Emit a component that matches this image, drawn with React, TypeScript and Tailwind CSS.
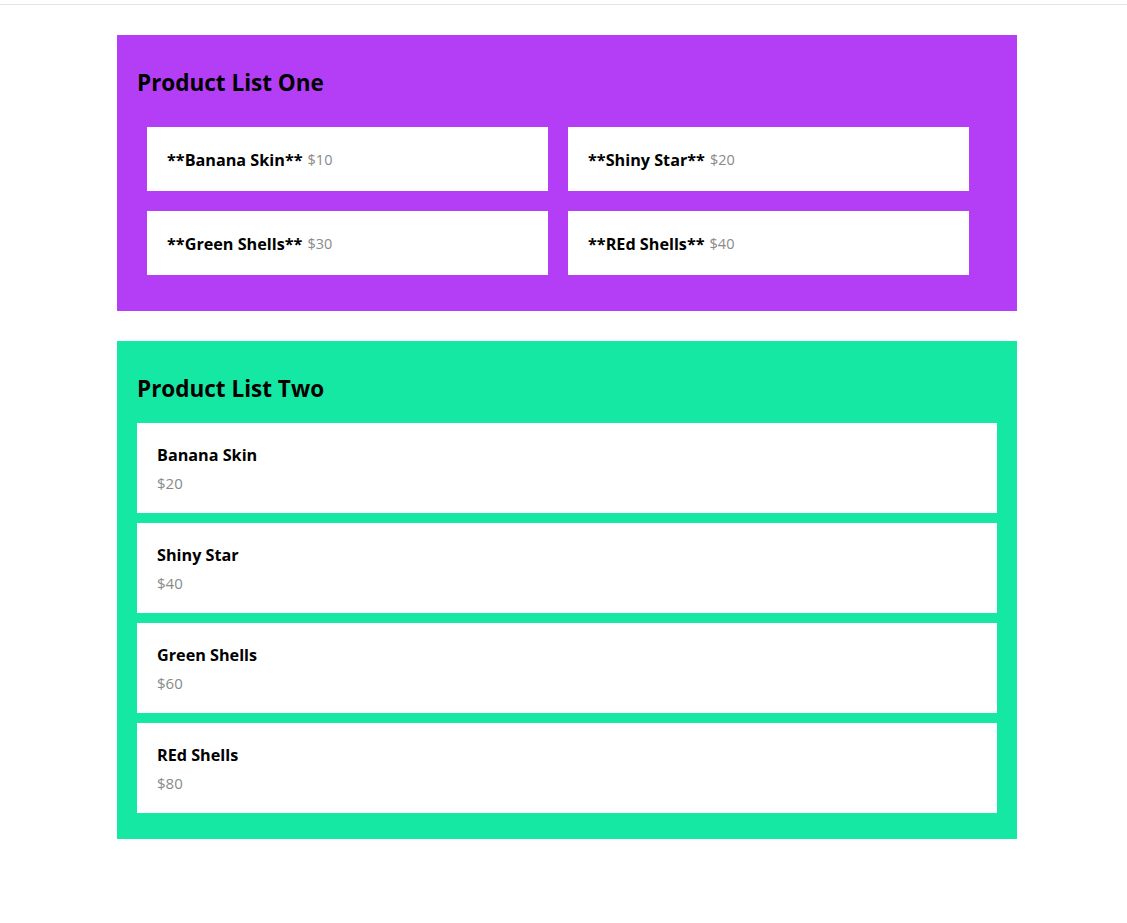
const listOne = [
  { name: "Banana Skin", price: 10 },
  { name: "Shiny Star", price: 20 },
  { name: "Green Shells", price: 30 },
  { name: "REd Shells", price: 40 },
];

const listTwo = [
  { name: "Banana Skin", price: 20 },
  { name: "Shiny Star", price: 40 },
  { name: "Green Shells", price: 60 },
  { name: "REd Shells", price: 80 },
];

const font = { fontFamily: '"Open Sans", "Noto Sans", sans-serif' };

const ProductListOne = () => (
  <div className="bg-[#b43ef6] px-5 pt-5 pb-[26px]">
    <h2 className="mt-[12px] mb-[18px] text-[22.5px] leading-[32px] font-bold text-black">
      Product List One
    </h2>
    <div className="flex flex-wrap">
      {listOne.map((p) => (
        <div
          key={p.name}
          className="m-[10px] w-[401px] h-[64px] bg-white px-5 pt-[2px] flex items-center"
        >
          <span className="text-[16.2px] font-bold text-black">**{p.name}**</span>
          <span className="ml-[5px] text-[14.5px] text-[#8a8a8a]">${p.price}</span>
        </div>
      ))}
    </div>
  </div>
);

const ProductListTwo = () => (
  <div className="bg-[#15e8a2] px-5 pt-5 pb-[26px]">
    <h2 className="mt-[12px] mb-[18px] text-[22.5px] leading-[32px] font-bold text-black">
      Product List Two
    </h2>
    <div className="flex flex-col gap-[10px]">
      {listTwo.map((p) => (
        <div key={p.name} className="h-[90px] bg-white px-5 pt-5">
          <div className="text-[16.2px] leading-[24px] font-bold text-black">{p.name}</div>
          <div className="mt-[5px] text-[15px] leading-[22px] text-[#8a8a8a]">${p.price}</div>
        </div>
      ))}
    </div>
  </div>
);

export default function App() {
  return (
    <div className="min-h-[923px] bg-white" style={font}>
      <div className="pt-[4px]">
        <div className="border-t border-[#e3e3e3]" />
      </div>
      <div className="ml-[117px] w-[900px] pt-[30px] flex flex-col gap-[30px]">
        <ProductListOne />
        <ProductListTwo />
      </div>
    </div>
  );
}
